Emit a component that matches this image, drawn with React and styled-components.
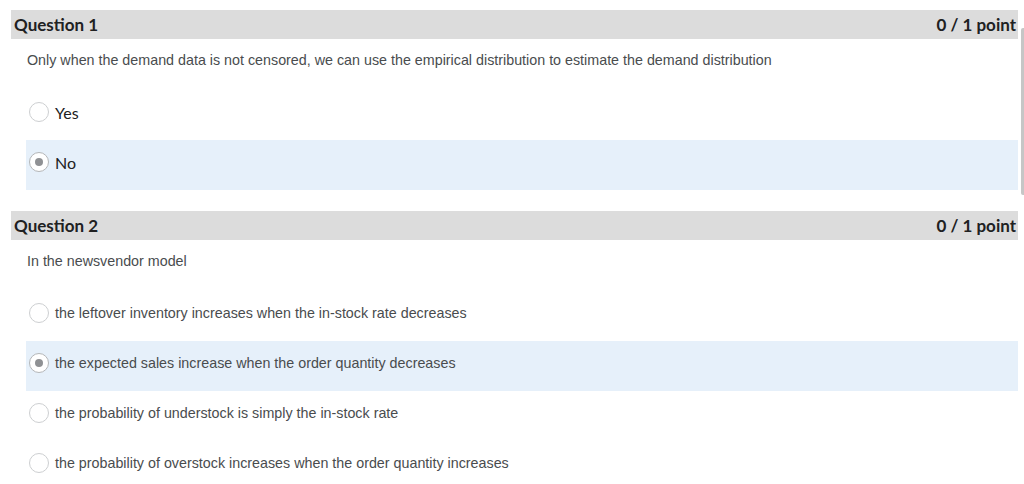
import React from 'react';
import styled, { createGlobalStyle } from 'styled-components';

const questions = [
  {
    title: 'Question 1',
    score: '0 / 1 point',
    prompt:
      'Only when the demand data is not censored, we can use the empirical distribution to estimate the demand distribution',
    large: true,
    options: ['Yes', 'No'],
    selected: 1,
  },
  {
    title: 'Question 2',
    score: '0 / 1 point',
    prompt: 'In the newsvendor model',
    large: false,
    options: [
      'the leftover inventory increases when the in-stock rate decreases',
      'the expected sales increase when the order quantity decreases',
      'the probability of understock is simply the in-stock rate',
      'the probability of overstock increases when the order quantity increases',
    ],
    selected: 1,
  },
];

function App() {
  return (
    <Page>
      <GlobalStyle />
      {questions.map((q) => (
        <Question key={q.title}>
          <Header>
            <span>{q.title}</span>
            <span>{q.score}</span>
          </Header>
          <Prompt>{q.prompt}</Prompt>
          <Options>
            {q.options.map((opt, i) => (
              <Option key={opt} $selected={i === q.selected}>
                <Radio $checked={i === q.selected} />
                <OptionText $large={q.large}>{opt}</OptionText>
              </Option>
            ))}
          </Options>
        </Question>
      ))}
      <Scrollbar />
    </Page>
  );
}

const GlobalStyle = createGlobalStyle`
  body {
    margin: 0;
    background: #fff;
  }
`;

const Page = styled.div`
  position: relative;
  width: 1024px;
  height: 484px;
  overflow: hidden;
  box-sizing: border-box;
  padding: 10px 6px 0 11px;
  display: flex;
  flex-direction: column;
  gap: 21px;
`;

const Question = styled.section`
  display: flex;
  flex-direction: column;
`;

const Header = styled.div`
  height: 29px;
  background: #dcdcdc;
  display: flex;
  align-items: center;
  justify-content: space-between;
  padding: 0 2px 0 3px;
  font-family: Lato, 'Noto Sans', sans-serif;
  font-weight: 700;
  font-size: 17px;
  color: #202122;
`;

const Prompt = styled.div`
  height: 51px;
  box-sizing: border-box;
  padding: 13px 0 0 16px;
  font-family: 'Liberation Sans', Arial, sans-serif;
  font-size: 14.3px;
  line-height: 16px;
  color: #494c4e;
`;

const Options = styled.div`
  display: flex;
  flex-direction: column;
  margin-left: 15px;
`;

const Option = styled.div`
  height: 50px;
  box-sizing: border-box;
  padding: 0 0 6px 3px;
  display: flex;
  align-items: center;
  gap: 6px;
  background: ${(p) => (p.$selected ? '#e6f0fa' : 'transparent')};
`;

const Radio = styled.span`
  width: 20px;
  height: 20px;
  box-sizing: border-box;
  border-radius: 50%;
  border: 1px solid ${(p) => (p.$checked ? '#b4b6b8' : '#cdcfd1')};
  background: #fff;
  display: flex;
  align-items: center;
  justify-content: center;
  flex-shrink: 0;

  &::after {
    content: '';
    display: ${(p) => (p.$checked ? 'block' : 'none')};
    width: 8px;
    height: 8px;
    border-radius: 50%;
    background: #8f9194;
  }
`;

const OptionText = styled.span`
  font-family: ${(p) =>
    p.$large ? "Lato, 'Noto Sans', sans-serif" : "'Liberation Sans', Arial, sans-serif"};
  font-size: ${(p) => (p.$large ? '16px' : '14.3px')};
  color: ${(p) => (p.$large ? '#202122' : '#494c4e')};
`;

const Scrollbar = styled.div`
  position: absolute;
  top: 28px;
  right: 0;
  width: 3px;
  height: 167px;
  background: #c6c6c6;
  border-radius: 2px 0 0 2px;
`;

export default App;
